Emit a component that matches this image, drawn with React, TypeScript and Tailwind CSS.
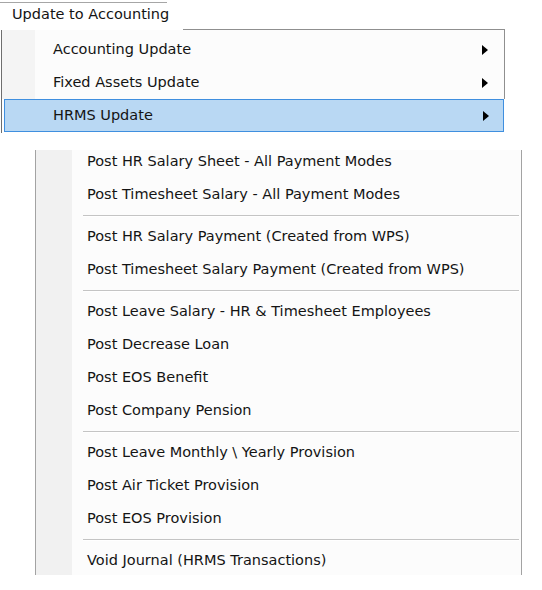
import React from "react";

const Arrow = () => (
  <svg width="6" height="10" viewBox="0 0 6 10" className="block">
    <path d="M0 0 L6 5 L0 10 Z" fill="#000" />
  </svg>
);

type Entry = { t: string } | "sep";

const items: Entry[] = [
  { t: "Post HR Salary Sheet - All Payment Modes" },
  { t: "Post Timesheet Salary - All Payment Modes" },
  "sep",
  { t: "Post HR Salary Payment (Created from WPS)" },
  { t: "Post Timesheet Salary Payment (Created from WPS)" },
  "sep",
  { t: "Post Leave Salary - HR & Timesheet Employees" },
  { t: "Post Decrease Loan" },
  { t: "Post EOS Benefit" },
  { t: "Post Company Pension" },
  "sep",
  { t: "Post Leave Monthly \\ Yearly Provision" },
  { t: "Post Air Ticket Provision" },
  { t: "Post EOS Provision" },
  "sep",
  { t: "Void Journal (HRMS Transactions)" },
];

export default function App() {
  return (
    <div
      className="w-[542px] h-[590px] bg-white text-[#141414] text-[14.5px] overflow-hidden"
      style={{ fontFamily: '"DejaVu Sans", sans-serif' }}
    >
      {/* Top tab row */}
      <div className="flex h-[30px]">
        <div className="w-[183px] pt-[2px]">
          <div className="w-[167px] h-[28px] border-t border-[#a6a6a6] pl-[12px] flex items-center pb-[4px] whitespace-nowrap">
            Update to Accounting
          </div>
        </div>
        <div className="w-[322px] self-end border-b border-[#8f8f8f]" />
      </div>

      {/* Top menu */}
      <div className="ml-[1px] w-[504px] h-[103px] border-l border-[#6e6e6e] flex flex-col">
        <div className="h-[3px] flex border-r border-[#8f8f8f]">
          <div className="w-[33px] bg-[#f4f4f4]" />
          <div className="flex-1 bg-[#fcfcfc]" />
        </div>
        {["Accounting Update", "Fixed Assets Update"].map((t) => (
          <div key={t} className="h-[33px] flex border-r border-[#8f8f8f]">
            <div className="w-[33px] bg-[#f4f4f4]" />
            <div className="flex-1 bg-[#fcfcfc] flex items-center pl-[18px] pr-[16px] whitespace-nowrap">
              <span className="flex-1">{t}</span>
              <Arrow />
            </div>
          </div>
        ))}
        <div className="ml-[2px] mr-[1px] h-[33px] border border-[#3f8fdf] bg-[#b9d8f3] flex items-center pl-[48px] pr-[14px] whitespace-nowrap">
          <span className="flex-1">HRMS Update</span>
          <Arrow />
        </div>
      </div>

      {/* Submenu */}
      <div className="mt-[17px] ml-[35px] w-[487px] h-[425px] border-l border-r border-[#a3a3a3] flex overflow-hidden">
        <div className="w-[36px] bg-[#f1f1f1]" />
        <div className="flex-1 bg-[#fcfcfc] flex flex-col">
          {items.map((e, i) =>
            e === "sep" ? (
              <div key={i} className="h-[9px] pt-[4px] shrink-0">
                <div className="ml-[11px] mr-[2px] h-[2px] border-t border-[#c4c4c4] border-b border-b-white" />
              </div>
            ) : (
              <div
                key={i}
                className={
                  (i === 0 ? "h-[28px] pb-[5px] " : "h-[33px] ") +
                  "shrink-0 flex items-center pl-[15px] whitespace-nowrap"
                }
              >
                {e.t}
              </div>
            )
          )}
        </div>
      </div>
    </div>
  );
}
